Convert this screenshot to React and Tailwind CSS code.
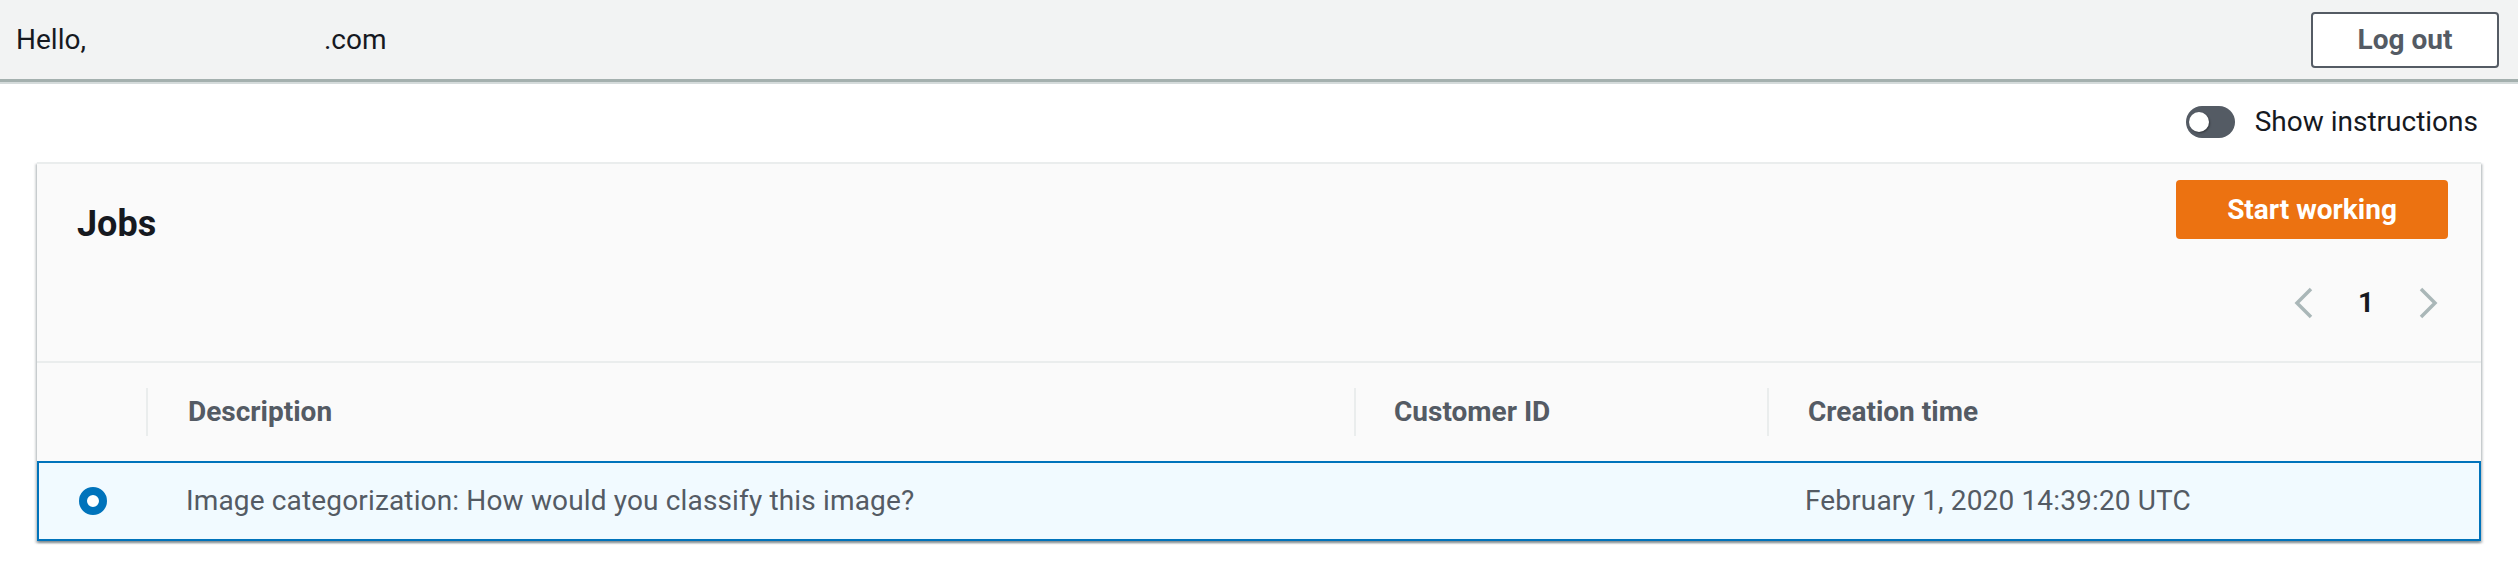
import React from 'react'

function Chevron({ dir }) {
  return (
    <svg width="20" height="32" viewBox="0 0 20 32" fill="none">
      <path
        d={dir === 'left' ? 'M17 2 L3 16 L17 30' : 'M3 2 L17 16 L3 30'}
        stroke="#aab7b8"
        strokeWidth="3.5"
      />
    </svg>
  )
}

export default function App() {
  return (
    <div className="w-[2518px] min-h-[561px] bg-white font-['Roboto','Liberation_Sans',sans-serif] text-[#16191f]">
      {/* Top bar */}
      <header className="h-[82px] bg-[#f2f3f3] border-b-[3px] border-[#a4b0ae] shadow-[0_2px_0_0_#d5dbdb] flex items-center justify-between pl-[16px] pr-[19px]">
        <div className="text-[28px] leading-none">
          <span>Hello,</span>
          <span className="ml-[238px]">.com</span>
        </div>
        <button className="w-[188px] h-[56px] bg-white border-2 border-[#545b64] rounded-[4px] text-[28px] font-bold text-[#545b64]">
          Log out
        </button>
      </header>

      {/* Instructions toggle */}
      <div className="h-[80px] flex items-center justify-end pr-[40px]">
        <div className="w-[49px] h-[32px] rounded-full bg-[#545b64] flex items-center pl-[3px]">
          <div className="w-[20px] h-[20px] rounded-full bg-white shadow-[1px_1px_2px_rgba(0,0,0,0.4)]" />
        </div>
        <span className="ml-[20px] text-[28px]">Show instructions</span>
      </div>

      {/* Jobs card */}
      <div className="mx-[37px] bg-[#fafafa] border-t-2 border-[#eaeded] shadow-[0_2px_2px_0_rgba(0,28,36,0.3),2px_2px_2px_0_rgba(0,28,36,0.15),-2px_2px_2px_0_rgba(0,28,36,0.15)]">
        <div className="flex justify-between pl-[40px] pr-[33px] pt-[16px] pb-[37px] border-b-2 border-[#eaeded]">
          <h2 className="mt-[22px] text-[36px] leading-[44px] font-bold">Jobs</h2>
          <div className="flex flex-col items-end">
            <button className="w-[272px] h-[59px] bg-[#ec7211] rounded-[4px] text-white text-[28px] font-bold">
              Start working
            </button>
            <div className="mt-[43px] flex items-center gap-[44px] pr-[10px]">
              <Chevron dir="left" />
              <span className="text-[28px] font-bold">1</span>
              <Chevron dir="right" />
            </div>
          </div>
        </div>

        {/* Table header */}
        <div className="h-[98px] flex items-center text-[28px] font-bold text-[#545b64]">
          <div className="w-[109px]" />
          <div className="w-[1208px] h-[48px] border-l-2 border-[#eaeded] pl-[40px] flex items-center">Description</div>
          <div className="w-[413px] h-[48px] border-l-2 border-[#eaeded] pl-[38px] flex items-center">Customer ID</div>
          <div className="flex-1 h-[48px] border-l-2 border-[#eaeded] pl-[39px] flex items-center">Creation time</div>
        </div>

        {/* Selected row */}
        <div className="h-[80px] flex items-center bg-[#f1faff] border-2 border-[#0073bb] text-[28px] text-[#545b64]">
          <div className="w-[107px] flex justify-center">
            <div className="w-[28px] h-[28px] rounded-full border-[8px] border-[#0073bb] bg-white" />
          </div>
          <div className="w-[1208px] pl-[40px] tracking-[0.15px]">Image categorization: How would you classify this image?</div>
          <div className="w-[413px]" />
          <div className="flex-1 pl-[38px] tracking-[0.15px]">February 1, 2020 14:39:20 UTC</div>
        </div>
      </div>
    </div>
  )
}
